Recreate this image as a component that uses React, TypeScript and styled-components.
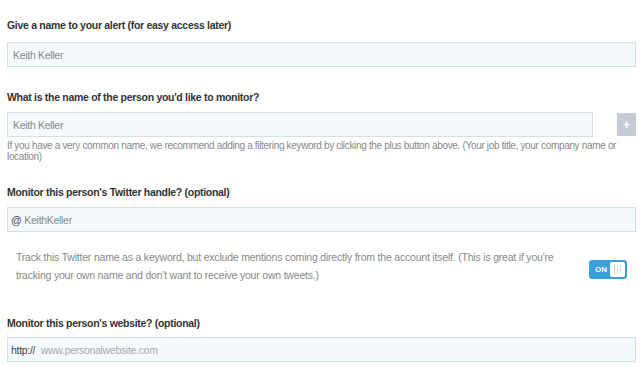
import { FC } from 'react';
import styled, { createGlobalStyle } from 'styled-components';

const GlobalStyle = createGlobalStyle`
    body {
        margin: 0;
        background: #ffffff;
        font-family: "Liberation Sans", Arial, sans-serif;
    }
`;

const Page = styled.div`
    width: 640px;
    height: 374px;
    box-sizing: border-box;
    padding: 18px 4px 0 7px;
    background: #ffffff;
    overflow: hidden;
`;

const Section = styled.div<{ $gap?: number }>`
    margin-bottom: ${p => p.$gap ?? 23}px;
`;

const Label = styled.div<{ $space?: number }>`
    font-size: 10.5px;
    letter-spacing: -0.3px;
    line-height: 14px;
    font-weight: bold;
    color: #333;
    margin-bottom: ${p => p.$space ?? 8}px;
`;

const Field = styled.div`
    height: 25px;
    box-sizing: border-box;
    display: flex;
    align-items: center;
    padding: 0 5px;
    border: 1px solid #d3e1e4;
    background: #f4fafb;
    font-size: 10.5px;
    letter-spacing: -0.3px;
    color: #888;
    flex: 1;
`;

const Prefix = styled.span`
    color: #444;
    margin-left: -2px;
    margin-right: 3px;
`;

const Placeholder = styled.span<{ $light?: boolean }>`
    color: ${p => (p.$light ? '#aaa' : '#888')};
`;

const Row = styled.div`
    display: flex;
    align-items: center;
    gap: 24px;
`;

const PlusButton = styled.div`
    width: 19px;
    height: 23px;
    background: #c5ccd8;
    color: #fff;
    font-size: 12px;
    font-weight: bold;
    display: flex;
    align-items: center;
    justify-content: center;
`;

const Help = styled.div`
    margin-top: 3px;
    font-size: 10px;
    letter-spacing: -0.33px;
    line-height: 11px;
    color: #888;
`;

const ToggleRow = styled.div`
    display: flex;
    align-items: center;
    justify-content: space-between;
    padding: 16px 9px 0 9px;
`;

const ToggleText = styled.div`
    width: 552px;
    font-size: 10.5px;
    letter-spacing: -0.2px;
    line-height: 18px;
    color: #888;
`;

const Toggle = styled.div`
    width: 38px;
    height: 19px;
    box-sizing: border-box;
    border-radius: 3px;
    background: #39a0dc;
    display: flex;
    align-items: center;
    justify-content: space-between;
    padding: 0 2px 0 6px;
    margin-top: 6px;
`;

const ToggleLabel = styled.span`
    color: #fff;
    font-size: 8px;
    font-weight: bold;
`;

const Knob = styled.div`
    width: 15px;
    height: 15px;
    border-radius: 2px;
    background: #fff;
    display: flex;
    align-items: center;
    justify-content: center;
    gap: 2px;
`;

const Grip = styled.span`
    width: 1px;
    height: 8px;
    background: #c9d0d6;
`;

const App: FC = () => {
    return (
      <>
        <GlobalStyle />
        <Page>
          <Section>
            <Label $space={10}>Give a name to your alert (for easy access later)</Label>
            <Field>Keith Keller</Field>
          </Section>
          <Section>
            <Label>What is the name of the person you'd like to monitor?</Label>
            <Row>
              <Field>Keith Keller</Field>
              <PlusButton>+</PlusButton>
            </Row>
            <Help>
              If you have a very common name, we recommend adding a filtering keyword by clicking the plus
              button above. (Your job title, your company name or location)
            </Help>
          </Section>
          <Section $gap={32}>
            <Label>Monitor this person's Twitter handle? (optional)</Label>
            <Field>
              <Prefix>@</Prefix>
              <Placeholder>KeithKeller</Placeholder>
            </Field>
            <ToggleRow>
              <ToggleText>
                Track this Twitter name as a keyword, but exclude mentions coming directly from the account
                itself. (This is great if you're tracking your own name and don't want to receive your own tweets.)
              </ToggleText>
              <Toggle>
                <ToggleLabel>ON</ToggleLabel>
                <Knob>
                  <Grip />
                  <Grip />
                  <Grip />
                </Knob>
              </Toggle>
            </ToggleRow>
          </Section>
          <Section>
            <Label $space={7}>Monitor this person's website? (optional)</Label>
            <Field>
              <Prefix>http://</Prefix>
              <Placeholder $light>&nbsp;www.personalwebsite.com</Placeholder>
            </Field>
          </Section>
        </Page>
      </>
    );
};

export default App;
